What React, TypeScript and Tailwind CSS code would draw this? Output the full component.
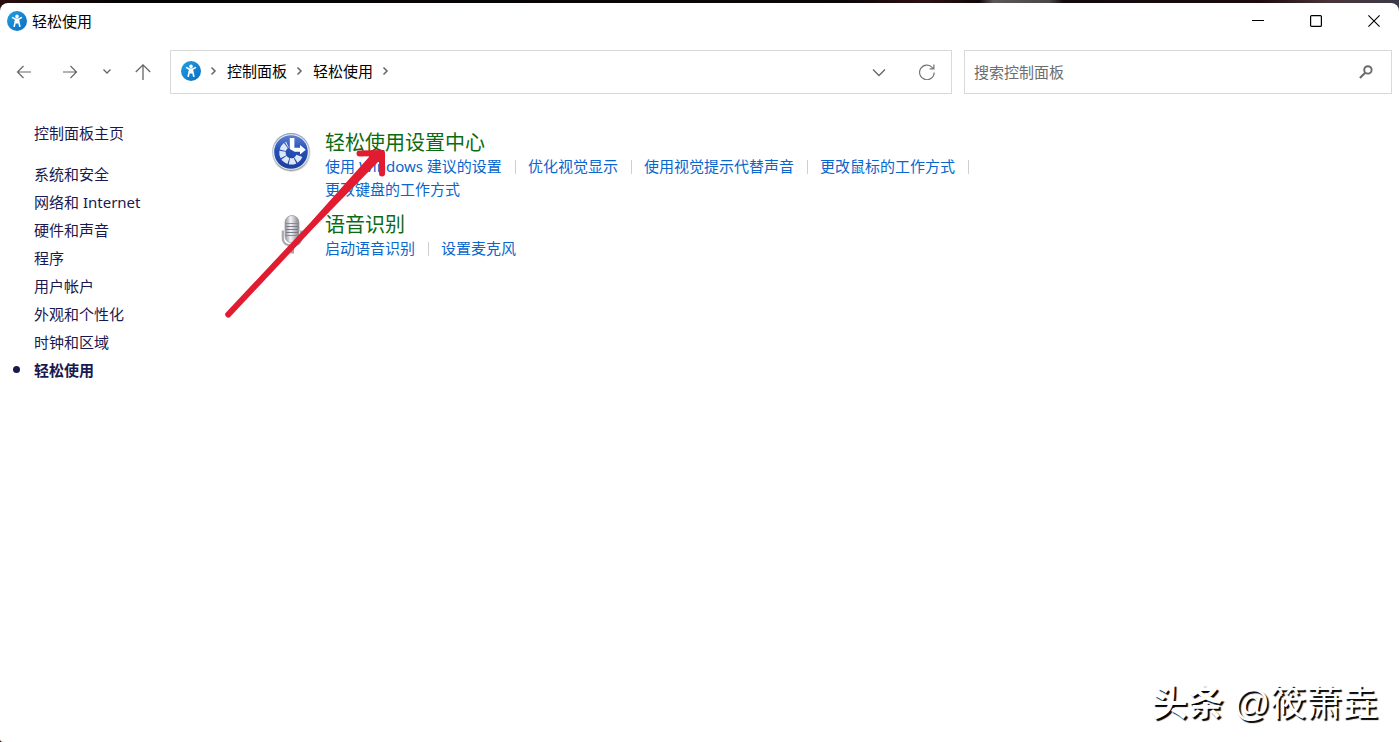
import type { ReactNode } from 'react';

interface Category {
  title: string;
  icon: ReactNode;
  links: string[];
}

const sidebarLinks = [
  '系统和安全',
  '网络和 Internet',
  '硬件和声音',
  '程序',
  '用户帐户',
  '外观和个性化',
  '时钟和区域',
];

function AccessIcon() {
  return (
    <svg viewBox="0 0 20 20" className="h-5 w-5 shrink-0" aria-hidden="true">
      <defs>
        <linearGradient id="access" x1="0" y1="0" x2="1" y2="1">
          <stop offset="0" stopColor="#1f9fe2" />
          <stop offset="1" stopColor="#0d6cc0" />
        </linearGradient>
      </defs>
      <circle cx="10" cy="10" r="10" fill="url(#access)" />
      <circle cx="10" cy="5.4" r="1.8" fill="#fff" />
      <path
        d="M5.6 6.6 8.4 8.2h3.2l2.8-1.6M8.600 9.400 7.200 15.200M11.400 9.400l1.400 5.800"
        fill="none"
        stroke="#fff"
        strokeWidth="1.6"
        strokeLinecap="round"
      />
      <path d="M8 7.8h4l.2 4-1 .7H8.8l-1-.7z" fill="#fff" />
    </svg>
  );
}

function EaseCenterIcon() {
  return (
    <svg viewBox="0 0 40 40" className="h-10 w-10" aria-hidden="true">
      <defs>
        <linearGradient id="rim" x1="0" y1="0" x2="0" y2="1">
          <stop offset="0" stopColor="#8b9cc4" />
          <stop offset="0.6" stopColor="#c9ced8" />
          <stop offset="1" stopColor="#9a9c9c" />
        </linearGradient>
        <linearGradient id="disc" x1="0" y1="0" x2="0" y2="1">
          <stop offset="0" stopColor="#5c7fd0" />
          <stop offset="0.45" stopColor="#2450b4" />
          <stop offset="1" stopColor="#1c3f9f" />
        </linearGradient>
      </defs>
      <circle cx="20.5" cy="21" r="19" fill="#c8c8c4" opacity="0.6" />
      <circle cx="20" cy="20" r="19" fill="url(#rim)" />
      <circle cx="20" cy="20" r="17.8" fill="#e9edf5" />
      <circle cx="20" cy="20" r="16.8" fill="url(#disc)" />
      <path
        d="M28.4 23.8A8.8 8.8 0 1 1 16.5 12.6"
        fill="none"
        stroke="#dfe6f5"
        strokeWidth="6.4"
        strokeDasharray="5.6 1"
      />
      <path d="M18.8 6h4.6v9.800h5.600v-2.800l5.800 4.800-5.800 4.800v-2.800h-5.400l-4.800-2.800z" fill="#fff" />
    </svg>
  );
}

function MicrophoneIcon() {
  return (
    <svg viewBox="0 0 40 40" className="h-10 w-10" aria-hidden="true">
      <defs>
        <linearGradient id="mic" x1="0" y1="0" x2="1" y2="0">
          <stop offset="0" stopColor="#8f8f98" />
          <stop offset="0.4" stopColor="#f4f4f8" />
          <stop offset="1" stopColor="#82828c" />
        </linearGradient>
      </defs>
      <path
        d="M11.8 16.5v7.5c0 5.2 4 7.6 9.2 7.6s9.2-2.4 9.2-7.6v-7.5"
        fill="none"
        stroke="#a9a9b1"
        strokeWidth="2.2"
      />
      <path d="M19.5 31h3.500v8.500h-3.500z" fill="#a4a4ac" />
      <rect x="14" y="1.5" width="14" height="27.5" rx="7" fill="url(#mic)" stroke="#9a9aa4" strokeWidth="0.8" />
      <path d="M15 12.5h12M15 15.5h12M15 18.5h12" stroke="#7c7c88" strokeWidth="1.1" />
      <path d="M14.5 9.5h13M14.5 21.5h13" stroke="#8b8b96" />
    </svg>
  );
}

const categories: Category[] = [
  {
    title: '轻松使用设置中心',
    icon: <EaseCenterIcon />,
    links: [
      '使用 Windows 建议的设置',
      '优化视觉显示',
      '使用视觉提示代替声音',
      '更改鼠标的工作方式',
      '更改键盘的工作方式',
    ],
  },
  {
    title: '语音识别',
    icon: <MicrophoneIcon />,
    links: ['启动语音识别', '设置麦克风'],
  },
];

function Crumb() {
  return (
    <svg viewBox="0 0 26 10" className="h-[10px] w-[26px] shrink-0" aria-hidden="true">
      <path d="M10.5 1.5 14 5l-3.5 3.5" fill="none" stroke="#666" strokeWidth="1.5" />
    </svg>
  );
}

function TitleBar() {
  return (
    <header className="flex h-9 items-center justify-between pr-[19px] pl-[7px]">
      <div className="flex items-center gap-[5px]">
        <AccessIcon />
        <h1>轻松使用</h1>
      </div>
      <div className="flex gap-[46px]">
        <button aria-label="最小化">
          <svg viewBox="0 0 12 12" className="h-3 w-3">
            <path d="M0 5.5h12" stroke="#000" />
          </svg>
        </button>
        <button aria-label="最大化">
          <svg viewBox="0 0 12 12" className="h-3 w-3">
            <rect x="0.6" y="0.6" width="10.8" height="10.8" rx="1" fill="none" stroke="#000" strokeWidth="1.2" />
          </svg>
        </button>
        <button aria-label="关闭">
          <svg viewBox="0 0 12 12" className="h-3 w-3">
            <path d="m.4.4 11.2 11.2M11.6.4.4 11.6" stroke="#000" strokeWidth="1.1" />
          </svg>
        </button>
      </div>
    </header>
  );
}

function NavigationBar() {
  return (
    <div className="mt-[11px] flex h-11 pr-[7px]">
      <nav className="flex w-[170px] shrink-0 items-center text-[#666]">
        <button aria-label="后退" className="flex w-12 justify-center">
          <svg viewBox="0 0 16 16" className="h-4 w-4" fill="none" stroke="currentColor" strokeWidth="1.2">
            <path d="M15 8H1.5M7.5 2l-6 6 6 6" />
          </svg>
        </button>
        <button aria-label="前进" className="flex w-11 justify-center">
          <svg viewBox="0 0 16 16" className="h-4 w-4" fill="none" stroke="currentColor" strokeWidth="1.2">
            <path d="M1 8h13.5M8.5 2l6 6-6 6" />
          </svg>
        </button>
        <button aria-label="最近位置" className="flex w-[30px] justify-center">
          <svg viewBox="0 0 10 10" className="h-[10px] w-[10px]" fill="none" stroke="currentColor" strokeWidth="1.3">
            <path d="m1.5 2.5 3.5 3.5 3.5-3.5" />
          </svg>
        </button>
        <button aria-label="上移" className="flex w-[42px] justify-center">
          <svg viewBox="0 0 16 16" className="h-4 w-4" fill="none" stroke="currentColor" strokeWidth="1.3">
            <path d="M8 16V1M.8 8 8 .9 15.2 8" />
          </svg>
        </button>
      </nav>

      <div className="flex flex-1 items-center border border-[#d9d9d9] pl-[10px]">
        <div className="flex items-center pb-[2px]">
          <AccessIcon />
          <Crumb />
          <a href="#home">控制面板</a>
          <Crumb />
          <a href="#ease">轻松使用</a>
          <Crumb />
        </div>
        <button aria-label="以前的位置" className="ml-auto flex w-12 justify-center">
          <svg viewBox="0 0 14 14" className="h-[14px] w-[14px]" fill="none" stroke="#666" strokeWidth="1.3">
            <path d="m1 4.5 6 6 6-6" />
          </svg>
        </button>
        <button aria-label="刷新" className="flex w-12 justify-center">
          <svg viewBox="0 0 16 16" className="h-4 w-4" fill="none" stroke="#777" strokeWidth="1.2">
            <path d="M15.2 8.5A7.3 7.3 0 1 1 13.4 3.6L14.6 4.6M14.9.6v4.2h-4.2" />
          </svg>
        </button>
      </div>

      <label className="ml-3 flex w-[428px] items-center border border-[#d9d9d9] pr-[18px] pl-[9px]">
        <input
          type="search"
          aria-label="搜索控制面板"
          placeholder="搜索控制面板"
          className="min-w-0 flex-1 outline-none placeholder:text-[#6d6d6d]"
        />
        <svg viewBox="0 0 14 14" className="h-[14px] w-[14px]" fill="none" stroke="#6a6a6a" aria-hidden="true">
          <circle cx="8.9" cy="4.9" r="3.7" strokeWidth="1.9" />
          <path d="M6.2 7.7.9 13" strokeWidth="2" />
        </svg>
      </label>
    </div>
  );
}

function Sidebar() {
  return (
    <aside className="w-[271px] shrink-0 pl-[34px] text-[#191950]">
      <a href="#home" className="block leading-7">
        控制面板主页
      </a>
      <ul className="mt-[13px] leading-7">
        {sidebarLinks.map((label) => (
          <li key={label}>
            <a href="#category">{label}</a>
          </li>
        ))}
        <li className="relative font-bold">
          <span className="absolute top-[10px] -left-[21px] h-[7px] w-[7px] rounded-full bg-[#191950]" />
          <a href="#ease" aria-current="page">
            轻松使用
          </a>
        </li>
      </ul>
    </aside>
  );
}

function CategoryRow({ title, icon, links }: Category) {
  return (
    <section className="flex gap-[14px]">
      <div className="mt-[2px] shrink-0">{icon}</div>
      <div>
        <h2 className="text-[20px] leading-[25px] text-[#0b6b12]">
          <a href="#open">{title}</a>
        </h2>
        <ul className="flex max-w-[660px] flex-wrap leading-[23px] text-[#0a66cc]">
          {links.map((label, i) => (
            <li key={label} className="flex items-center">
              <a href="#task">{label}</a>
              {i < links.length - 1 && <span className="mr-3 ml-[13px] h-[14px] w-px bg-[#cfcfcf]" />}
            </li>
          ))}
        </ul>
      </div>
    </section>
  );
}

export default function App() {
  return (
    <div className="relative min-h-screen bg-[linear-gradient(90deg,#2a0d0d_0%,#050303_8%,#0a0506_60%,#2b1012_66%,#120809_70%,#5a5656_71%,#4a4647_75%,#120a0b_76%,#1c0a0c_90%,#4a3438_95%,#3b3a48_100%)] pt-[3px] font-['Noto_Sans','Noto_Sans_CJK_SC',sans-serif] text-[15px] text-black">
      <div className="flex min-h-[calc(100vh-3px)] flex-col rounded-t-lg rounded-bl-[3px] bg-white">
        <TitleBar />
        <NavigationBar />
        <div className="flex flex-1 pt-[25px]">
          <Sidebar />
          <main className="flex flex-col gap-[11px] pt-[11px]">
            {categories.map((category) => (
              <CategoryRow key={category.title} {...category} />
            ))}
          </main>
        </div>
      </div>

      {/* Hand-drawn pointer over the first category */}
      <svg
        viewBox="0 0 170 180"
        className="pointer-events-none absolute top-[145px] left-[220px] h-[180px] w-[170px]"
        aria-hidden="true"
      >
        <path d="M6 167.5 90 78 149 12 148 8 165 8 164 18 158 17 94 82.5 10.5 171.5a3 3 0 0 1-4.5-4z" fill="#e11b30" />
        <path
          d="M139.500 8.500 162 8 162 28.500"
          fill="none"
          stroke="#e11b30"
          strokeWidth="6"
          strokeLinecap="round"
          strokeLinejoin="round"
        />
      </svg>

      {/* Watermark */}
      <p className="pointer-events-none absolute right-[21px] bottom-[14px] font-['Liberation_Sans','Noto_Sans_CJK_SC',sans-serif] text-[36px] leading-[48px] whitespace-nowrap text-white [text-shadow:2px_2px_1px_#000]">
        <span className="font-bold">头条</span> @筱萧垚
      </p>
    </div>
  );
}
